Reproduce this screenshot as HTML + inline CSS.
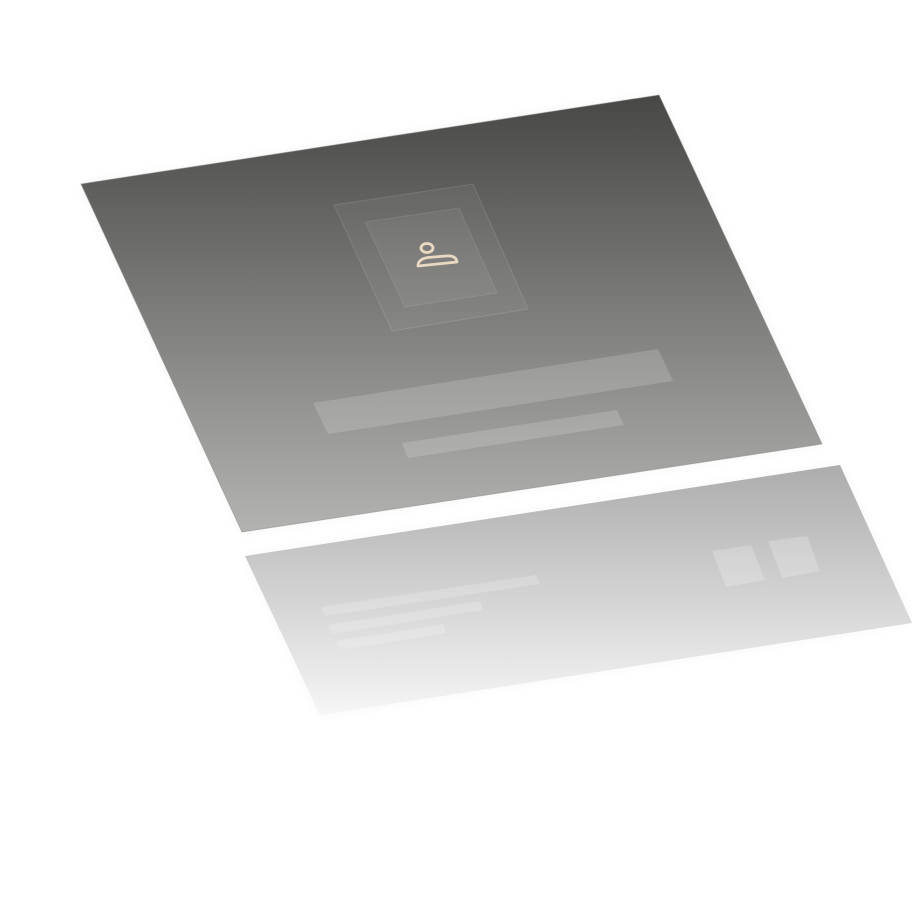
<!DOCTYPE html>
<html><head><style>html,body{margin:0;padding:0;background:#fff;width:912px;height:900px;overflow:hidden}</style></head>
<body>
<svg width="912" height="900" viewBox="0 0 912 900" xmlns="http://www.w3.org/2000/svg">
<defs>
<linearGradient id="g1" x1="0" y1="95" x2="0" y2="532" gradientUnits="userSpaceOnUse">
<stop offset="0" stop-color="#474745"/><stop offset="1" stop-color="#b3b3b1"/></linearGradient>
<linearGradient id="g2" x1="0" y1="465" x2="0" y2="715" gradientUnits="userSpaceOnUse">
<stop offset="0" stop-color="#acacac"/><stop offset="1" stop-color="#f6f6f6"/></linearGradient>
<filter id="sh" x="-10%" y="-10%" width="120%" height="120%"><feGaussianBlur stdDeviation="6"/></filter>
</defs>
<polygon points="81,184 659,95 822,444 242,532" fill="#000" opacity="0.04" filter="url(#sh)"/>
<polygon points="81,184 659,95 822,444 242,532" fill="url(#g1)" stroke="#8a857e" stroke-opacity="0.5" stroke-width="1"/>
<polygon points="334,205 473,184 528,309 392,331" fill="#fff" opacity="0.05"/>
<polygon points="334,205 473,184 528,309 392,331" fill="none" stroke="#fff" stroke-opacity="0.12"/>
<polygon points="365,222 459,208 497,293 405,307" fill="#fff" opacity="0.06"/>
<polygon points="365,222 459,208 497,293 405,307" fill="none" stroke="#fff" stroke-opacity="0.1"/>
<ellipse cx="427" cy="248" rx="6" ry="4.5" fill="none" stroke="#ead9c2" stroke-width="2.8"/>
<path d="M418,266 L457,262 Q456,255 446,256 L428,257.5 Q418,259 418,266 Z" fill="none" stroke="#ead9c2" stroke-width="2.8" stroke-linejoin="round"/>
<polygon points="313,403 658,349 673,381 328,434" fill="#fff" opacity="0.16"/>
<polygon points="402,443 617,410 624,425 408,458" fill="#fff" opacity="0.16"/>
<polygon points="245,556 840,465 912,623 320,715" fill="#000" opacity="0.03" filter="url(#sh)"/>
<polygon points="245,556 840,465 912,623 320,715" fill="url(#g2)"/>
<polygon points="321,607 536,575 540,584 325,616" fill="#fff" opacity="0.2"/>
<polygon points="328,625 480,601 483,610 331,634" fill="#fff" opacity="0.2"/>
<polygon points="336,641 443,624 446,633 339,650" fill="#fff" opacity="0.2"/>
<polygon points="712,551 751,545 765,580 726,587" fill="#fff" opacity="0.22"/>
<polygon points="768,541 807,536 820,571 782,578" fill="#fff" opacity="0.22"/>
</svg>
</body></html>
